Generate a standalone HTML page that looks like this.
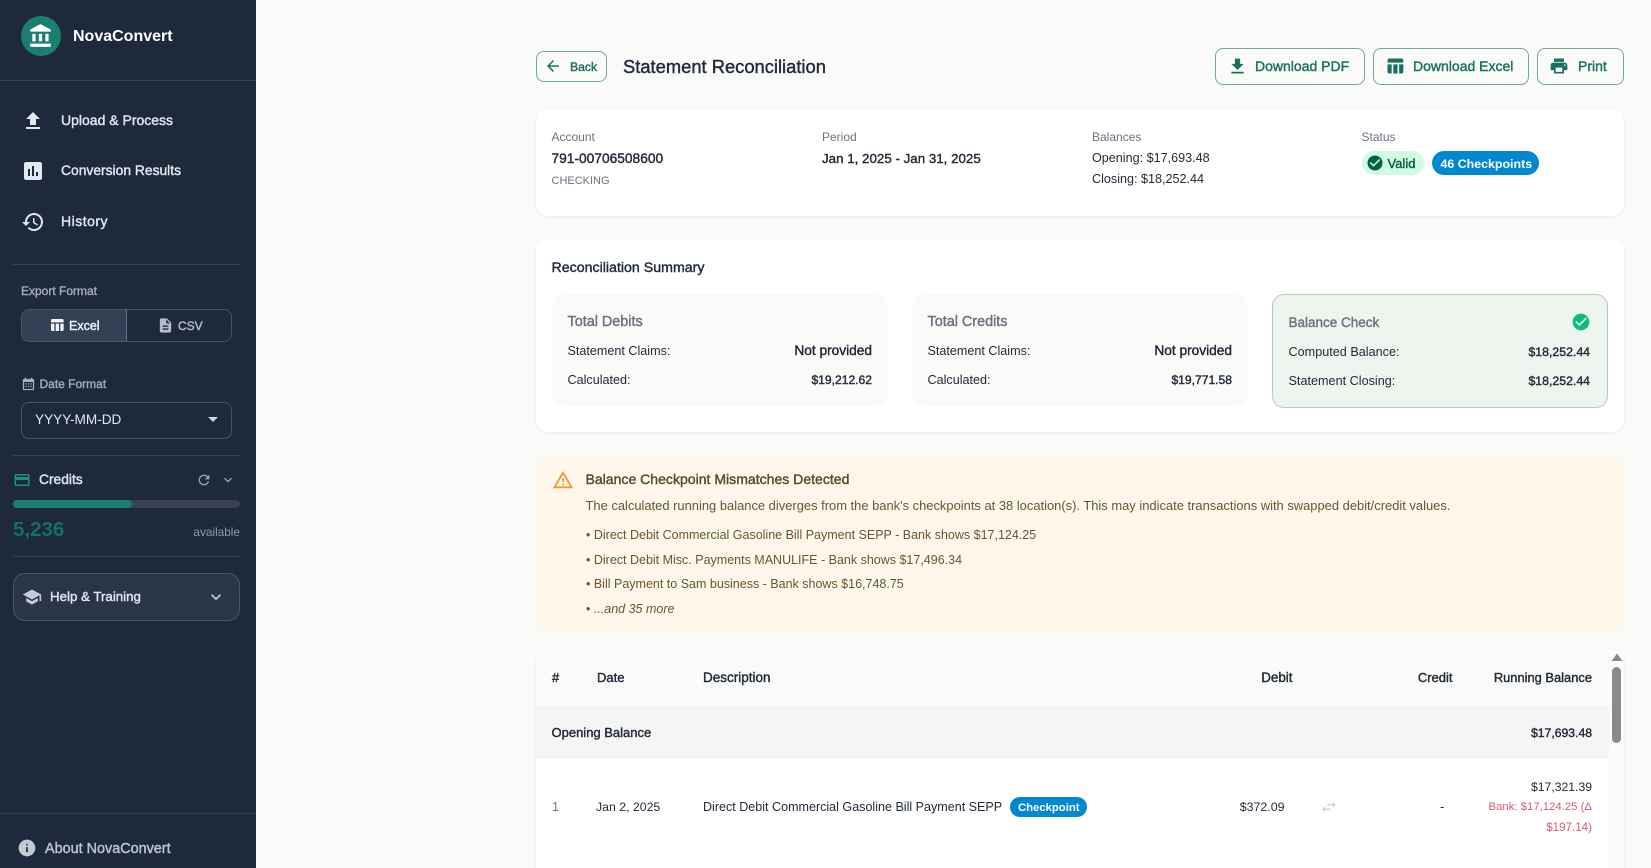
<!DOCTYPE html>
<html lang="en">
<head>
<meta charset="utf-8">
<title>Statement Reconciliation</title>
<style>
*{box-sizing:border-box;margin:0;padding:0}
html,body{width:1651px;height:868px;overflow:hidden;background:#fafaf9;font-family:"Liberation Sans",Arial,sans-serif}
#p{position:relative;width:1651px;height:868px;overflow:hidden}
.b{position:absolute}
.t{position:absolute;white-space:nowrap;line-height:20px;height:20px}
.s{-webkit-text-stroke:.4px currentColor}
.r{text-align:right}
svg{position:absolute;fill:currentColor}
.card{position:absolute;background:#fff;border-radius:12px;box-shadow:0 1px 3px rgba(0,0,0,.07)}
.btn{position:absolute;border:1px solid #6fa79e;border-radius:8px}
.teal{color:#1a6f62}
.side{color:#e2e8f0}
.dv{position:absolute;height:1px;background:#334155}
.lbl{color:#6b7280;font-size:12px}
.d{color:#1f2937}
.box{position:absolute;background:#fafaf8;border-radius:12px}
</style>
</head>
<body>
<div id="p">
<!-- sidebar -->
<div class="b" style="left:0;top:0;width:256px;height:868px;background:#1e293b"></div>
<div class="b" style="left:21px;top:16px;width:40px;height:40px;border-radius:50%;background:#1a7f6e"></div>
<svg style="left:28px;top:23px;color:#fff" width="26" height="26" viewBox="0 0 24 24"><path d="M4 10v7h3v-7H4zm6 0v7h3v-7h-3zM2 22h19v-3H2v3zm14-12v7h3v-7h-3zm-4.5-9L2 6v2h19V6l-9.5-5z"/></svg>
<div class="t" style="left:73px;top:26.5px;font-size:16px;font-weight:700;color:#fff">NovaConvert</div>
<div class="dv" style="left:0;top:80px;width:256px"></div>

<svg class="side" style="left:21px;top:108.5px" width="24" height="24" viewBox="0 0 24 24"><path d="M9 16h6v-6h4l-7-7-7 7h4v6zm-4 2h14v2H5v-2z"/></svg>
<div class="t s side" style="left:61px;top:109.5px;font-size:14px">Upload &amp; Process</div>
<svg class="side" style="left:21px;top:159px" width="24" height="24" viewBox="0 0 24 24"><path d="M19 3H5c-1.1 0-2 .9-2 2v14c0 1.1.9 2 2 2h14c1.1 0 2-.9 2-2V5c0-1.1-.9-2-2-2zM9 17H7v-7h2v7zm4 0h-2V7h2v10zm4 0h-2v-4h2v4z"/></svg>
<div class="t s side" style="left:61px;top:159.5px;font-size:13.85px">Conversion Results</div>
<svg class="side" style="left:21px;top:209.5px" width="24" height="24" viewBox="0 0 24 24"><path d="M13 3c-4.97 0-9 4.03-9 9H1l3.89 3.89.07.14L9 12H6c0-3.87 3.13-7 7-7s7 3.13 7 7-3.13 7-7 7c-1.93 0-3.68-.79-4.94-2.06l-1.42 1.42C8.27 19.99 10.51 21 13 21c4.97 0 9-4.03 9-9s-4.03-9-9-9zm-1 5v5l4.28 2.54.72-1.21-3.5-2.08V8H12z"/></svg>
<div class="t s side" style="left:61px;top:210.5px;font-size:14px;letter-spacing:.5px">History</div>
<div class="dv" style="left:13px;top:264px;width:227px"></div>

<div class="t s" style="left:21px;top:280.5px;font-size:12px;color:#a3abb8">Export Format</div>
<div class="b" style="left:21px;top:309px;width:211px;height:33px;border:1px solid #475569;border-radius:8px;overflow:hidden">
  <div class="b" style="left:0;top:0;width:105px;height:31px;background:#334155;border-right:1px solid #64748b"></div>
</div>
<svg style="left:49px;top:317px;color:#f1f5f9" width="16" height="16" viewBox="0 0 24 24"><path d="M10 10.02h5V21h-5zM17 21h3c1.1 0 2-.9 2-2v-9h-5v11zm3-18H5c-1.1 0-2 .9-2 2v3h19V5c0-1.1-.9-2-2-2zM3 19c0 1.1.9 2 2 2h3V10H3v9z"/></svg>
<div class="t s" style="left:69px;top:315.5px;font-size:12.5px;color:#f1f5f9">Excel</div>
<svg style="left:157px;top:317px;color:#b6bdc8" width="17" height="17" viewBox="0 0 24 24"><path d="M14 2H6c-1.1 0-1.99.9-1.99 2L4 20c0 1.1.89 2 1.99 2H18c1.1 0 2-.9 2-2V8l-6-6zm2 16H8v-2h8v2zm0-4H8v-2h8v2zm-3-5V3.5L18.5 9H13z"/></svg>
<div class="t s" style="left:178px;top:315.5px;font-size:12px;color:#b6bdc8">CSV</div>

<svg style="left:20.5px;top:376.5px;color:#a9b1bd" width="15" height="15" viewBox="0 0 24 24"><path d="M19 3h-1V1h-2v2H8V1H6v2H5c-1.11 0-1.99.9-1.99 2L3 19c0 1.1.89 2 2 2h14c1.1 0 2-.9 2-2V5c0-1.1-.9-2-2-2zm0 16H5V8h14v11zM9 10H7v2h2v-2zm4 0h-2v2h2v-2zm4 0h-2v2h2v-2zm-8 4H7v2h2v-2zm4 0h-2v2h2v-2zm4 0h-2v2h2v-2z"/></svg>
<div class="t s" style="left:39.5px;top:373.5px;font-size:12px;color:#a3abb8">Date Format</div>
<div class="b" style="left:21px;top:402px;width:211px;height:37px;border:1px solid #475569;border-radius:8px"></div>
<div class="t" style="left:35px;top:410px;font-size:13.6px;color:#e2e8f0">YYYY-MM-DD</div>
<svg style="left:200.7px;top:407px;color:#cbd5e1" width="24" height="24" viewBox="0 0 24 24"><path d="M7 10l5 5 5-5z"/></svg>
<div class="dv" style="left:13px;top:455px;width:227px"></div>

<svg style="left:12.5px;top:471px;color:#1a8f7c" width="18" height="18" viewBox="0 0 24 24"><path d="M20 4H4c-1.11 0-1.99.89-1.99 2L2 18c0 1.11.89 2 2 2h16c1.11 0 2-.89 2-2V6c0-1.11-.89-2-2-2zm0 14H4v-6h16v6zm0-10H4V6h16v2z"/></svg>
<div class="t s side" style="left:39px;top:470px;font-size:13.8px">Credits</div>
<svg style="left:196px;top:472px;color:#9aa3af" width="16" height="16" viewBox="0 0 24 24"><path d="M17.65 6.35C16.2 4.9 14.21 4 12 4c-4.42 0-7.99 3.58-7.99 8s3.57 8 7.99 8c3.73 0 6.84-2.55 7.73-6h-2.08c-.82 2.33-3.04 4-5.65 4-3.31 0-6-2.69-6-6s2.69-6 6-6c1.66 0 3.14.69 4.22 1.78L13 11h7V4l-2.35 2.35z"/></svg>
<svg style="left:219.7px;top:472px;color:#9aa3af" width="16" height="16" viewBox="0 0 24 24"><path d="M16.59 8.59L12 13.17 7.41 8.59 6 10l6 6 6-6z"/></svg>
<div class="b" style="left:13px;top:500px;width:227px;height:8px;border-radius:4px;background:#374151"></div>
<div class="b" style="left:13px;top:500px;width:119px;height:8px;border-radius:4px;background:#1a7f6e"></div>
<div class="t" style="left:13px;top:519.5px;font-size:20.5px;font-weight:700;color:#14705f">5,236</div>
<div class="t r" style="right:1411px;top:522px;font-size:11.8px;color:#8f98a6">available</div>
<div class="dv" style="left:13px;top:556px;width:227px"></div>

<div class="b" style="left:13px;top:573px;width:227px;height:48px;border-radius:12px;background:#2a3647;border:1px solid #4b5563"></div>
<svg style="left:22px;top:586.5px;color:#c5ccd6" width="20" height="20" viewBox="0 0 24 24"><path d="M5 13.18v4L12 21l7-3.82v-4L12 17l-7-3.82zM12 3L1 9l11 6 9-4.91V17h2V9L12 3z"/></svg>
<div class="t s side" style="left:50px;top:586.5px;font-size:13.3px">Help &amp; Training</div>
<svg style="left:206px;top:587px;color:#c5ccd6" width="20" height="20" viewBox="0 0 24 24"><path d="M16.59 8.59L12 13.17 7.41 8.59 6 10l6 6 6-6z"/></svg>
<div class="dv" style="left:0;top:813px;width:256px"></div>
<svg style="left:17px;top:838px;color:#c4cad3" width="20" height="20" viewBox="0 0 24 24"><path d="M12 2C6.48 2 2 6.48 2 12s4.48 10 10 10 10-4.48 10-10S17.52 2 12 2zm1 15h-2v-6h2v6zm0-8h-2V7h2v2z"/></svg>
<div class="t s" style="left:45px;top:838.5px;font-size:14.4px;color:#c0c6d0">About NovaConvert</div>

<!-- header -->
<div class="btn" style="left:536px;top:51px;width:71px;height:31px"></div>
<svg class="teal" style="left:544px;top:57px" width="18" height="18" viewBox="0 0 24 24"><path d="M20 11H7.83l5.59-5.59L12 4l-8 8 8 8 1.41-1.41L7.83 13H20v-2z"/></svg>
<div class="t s teal" style="left:570px;top:56.5px;font-size:12.2px">Back</div>
<div class="t s" style="left:623px;top:57px;font-size:18.35px;color:#1f2937">Statement Reconciliation</div>

<div class="btn" style="left:1215px;top:48px;width:150px;height:37px"></div>
<svg class="teal" style="left:1227px;top:55.5px" width="21" height="21" viewBox="0 0 24 24"><path d="M19 9h-4V3H9v6H5l7 7 7-7zM5 18v2h14v-2H5z"/></svg>
<div class="t s teal" style="left:1255px;top:55.5px;font-size:14px">Download PDF</div>
<div class="btn" style="left:1373px;top:48px;width:156px;height:37px"></div>
<svg class="teal" style="left:1384.5px;top:55.5px" width="20" height="20" viewBox="0 0 24 24"><path d="M10 10.02h5V21h-5zM17 21h3c1.1 0 2-.9 2-2v-9h-5v11zm3-18H5c-1.1 0-2 .9-2 2v3h19V5c0-1.1-.9-2-2-2zM3 19c0 1.1.9 2 2 2h3V10H3v9z"/></svg>
<div class="t s teal" style="left:1413px;top:55.5px;font-size:14px">Download Excel</div>
<div class="btn" style="left:1537px;top:48px;width:87px;height:37px"></div>
<svg class="teal" style="left:1549px;top:56px" width="20" height="20" viewBox="0 0 24 24"><path d="M19 8H5c-1.66 0-3 1.34-3 3v6h4v4h12v-4h4v-6c0-1.66-1.34-3-3-3zm-3 11H8v-5h8v5zm3-7c-.55 0-1-.45-1-1s.45-1 1-1 1 .45 1 1-.45 1-1 1zm-1-9H6v4h12V3z"/></svg>
<div class="t s teal" style="left:1578px;top:55.5px;font-size:14px">Print</div>

<!-- account card -->
<div class="card" style="left:536px;top:109px;width:1088px;height:107px"></div>
<div class="t lbl" style="left:551.5px;top:127px">Account</div>
<div class="t s d" style="left:551.5px;top:148.5px;font-size:13.75px">791-00706508600</div>
<div class="t lbl" style="left:551.5px;top:171px;font-size:11px">CHECKING</div>
<div class="t lbl" style="left:822px;top:127px">Period</div>
<div class="t s d" style="left:822px;top:148.5px;font-size:13.35px">Jan 1, 2025 - Jan 31, 2025</div>
<div class="t lbl" style="left:1092px;top:127px">Balances</div>
<div class="t d" style="left:1092px;top:147.5px;font-size:12.6px">Opening: $17,693.48</div>
<div class="t d" style="left:1092px;top:168.5px;font-size:12.6px">Closing: $18,252.44</div>
<div class="t lbl" style="left:1361.5px;top:127px">Status</div>
<div class="b" style="left:1362px;top:151px;width:62px;height:24px;border-radius:12px;background:#d1fae5"></div>
<svg style="left:1366px;top:154px;color:#065f46" width="18" height="18" viewBox="0 0 24 24"><path d="M12 2C6.48 2 2 6.48 2 12s4.48 10 10 10 10-4.48 10-10S17.52 2 12 2zm-2 15l-5-5 1.41-1.41L10 14.17l7.59-7.59L19 8l-9 9z"/></svg>
<div class="t s" style="left:1387.5px;top:153.5px;font-size:13px;color:#065f46">Valid</div>
<div class="b" style="left:1432px;top:151px;width:107px;height:24px;border-radius:12px;background:#0288d1"></div>
<div class="t" style="left:1440.5px;top:153.5px;font-size:12.4px;font-weight:700;color:#fff">46 Checkpoints</div>

<!-- summary -->
<div class="card" style="left:536px;top:240px;width:1088px;height:192px"></div>
<div class="t s d" style="left:551.5px;top:257.5px;font-size:14.2px">Reconciliation Summary</div>
<div class="box" style="left:552px;top:294px;width:336px;height:112px"></div>
<div class="t s" style="left:567.5px;top:311.5px;font-size:14.4px;color:#6b7280">Total Debits</div>
<div class="t d" style="left:567.5px;top:340.5px;font-size:12.6px">Statement Claims:</div>
<div class="t s d r" style="right:779px;top:340.5px;font-size:13.7px">Not provided</div>
<div class="t d" style="left:567.5px;top:369.5px;font-size:12.6px">Calculated:</div>
<div class="t s d r" style="right:779px;top:369.5px;font-size:12.1px">$19,212.62</div>

<div class="box" style="left:912px;top:294px;width:336px;height:112px"></div>
<div class="t s" style="left:927.5px;top:311.5px;font-size:14.4px;color:#6b7280">Total Credits</div>
<div class="t d" style="left:927.5px;top:340.5px;font-size:12.6px">Statement Claims:</div>
<div class="t s d r" style="right:419px;top:340.5px;font-size:13.7px">Not provided</div>
<div class="t d" style="left:927.5px;top:369.5px;font-size:12.6px">Calculated:</div>
<div class="t s d r" style="right:419px;top:369.5px;font-size:12.1px">$19,771.58</div>

<div class="box" style="left:1272px;top:294px;width:336px;height:114px;background:#edf5ee;border:1px solid #b5ccb8"></div>
<div class="t s" style="left:1288.5px;top:313px;font-size:13.5px;color:#6b7280">Balance Check</div>
<svg style="left:1571px;top:312px;color:#10b981" width="20" height="20" viewBox="0 0 24 24"><path d="M12 2C6.48 2 2 6.48 2 12s4.48 10 10 10 10-4.48 10-10S17.52 2 12 2zm-2 15l-5-5 1.41-1.41L10 14.17l7.59-7.59L19 8l-9 9z"/></svg>
<div class="t d" style="left:1288.5px;top:341.5px;font-size:12.65px">Computed Balance:</div>
<div class="t s d r" style="right:61px;top:341.5px;font-size:12.3px">$18,252.44</div>
<div class="t d" style="left:1288.5px;top:370.5px;font-size:12.65px">Statement Closing:</div>
<div class="t s d r" style="right:61px;top:370.5px;font-size:12.3px">$18,252.44</div>

<!-- warning -->
<div class="b" style="left:536px;top:456px;width:1088px;height:177px;border-radius:12px;background:#fff6ec"></div>
<svg style="left:552px;top:469px;color:#ed9c2c" width="22" height="22" viewBox="0 0 24 24"><path d="M12 5.99L19.53 19H4.47L12 5.99M12 2L1 21h22L12 2zm1 14h-2v2h2v-2zm0-6h-2v4h2v-4z"/></svg>
<div class="t s" style="left:585.5px;top:468.5px;font-size:14.05px;color:#5d4a2a">Balance Checkpoint Mismatches Detected</div>
<div class="t" style="left:585.5px;top:495.5px;font-size:12.93px;color:#6b5530">The calculated running balance diverges from the bank's checkpoints at 38 location(s). This may indicate transactions with swapped debit/credit values.</div>
<div class="t" style="left:586px;top:524.5px;font-size:12.5px;color:#6b5530">• Direct Debit Commercial Gasoline Bill Payment SEPP - Bank shows $17,124.25</div>
<div class="t" style="left:586px;top:549.5px;font-size:12.5px;color:#6b5530">• Direct Debit Misc. Payments MANULIFE - Bank shows $17,496.34</div>
<div class="t" style="left:586px;top:573.5px;font-size:12.5px;color:#6b5530">• Bill Payment to Sam business - Bank shows $16,748.75</div>
<div class="t" style="left:586px;top:598.5px;font-size:12.5px;color:#6b5530">• <i>...and 35 more</i></div>

<!-- table -->
<div class="card" style="left:536px;top:649px;width:1088px;height:240px;overflow:hidden">
  <div class="b" style="left:0;top:0;width:1073px;height:57px;background:#fafaf9"></div>
  <div class="b" style="left:0;top:57px;width:1073px;height:53px;background:#f5f5f5"></div>
  <div class="b" style="left:0;top:205px;width:1073px;height:1px;background:#fafafa"></div>
  <div class="b" style="left:1073px;top:0;width:15px;height:240px;background:#fbfbfb"></div>
</div>
<svg style="left:1611px;top:652px;color:#8a8a8a" width="12" height="11" viewBox="0 0 12 11"><path d="M6 1.5L11.5 9H.5z"/></svg>
<div class="b" style="left:1612px;top:667px;width:9px;height:76px;border-radius:4.5px;background:#8a8a8a"></div>

<div class="t s d" style="left:552px;top:668px;font-size:13px">#</div>
<div class="t s d" style="left:597px;top:668px;font-size:13px">Date</div>
<div class="t s d" style="left:703px;top:668px;font-size:13.5px">Description</div>
<div class="t s d r" style="right:358.5px;top:668px;font-size:13.4px">Debit</div>
<div class="t s d r" style="right:198.5px;top:668px;font-size:13px">Credit</div>
<div class="t s d r" style="right:59px;top:668px;font-size:12.9px">Running Balance</div>
<div class="t s d" style="left:551.5px;top:722.5px;font-size:13px">Opening Balance</div>
<div class="t s d r" style="right:59px;top:722.5px;font-size:12.2px">$17,693.48</div>

<div class="t" style="left:552px;top:796.5px;font-size:12.5px;color:#6b7280">1</div>
<div class="t d" style="left:596px;top:797px;font-size:12.3px">Jan 2, 2025</div>
<div class="t d" style="left:703px;top:797px;font-size:12.55px">Direct Debit Commercial Gasoline Bill Payment SEPP</div>
<div class="b" style="left:1010px;top:797px;width:77px;height:20px;border-radius:10px;background:#0288d1"></div>
<div class="t" style="left:1018px;top:797.5px;font-size:11.3px;font-weight:700;color:#fff">Checkpoint</div>
<div class="t d r" style="right:366.5px;top:797px;font-size:12.4px">$372.09</div>
<svg style="left:1320px;top:798px;color:#cfd4d8" width="18" height="18" viewBox="0 0 24 24"><path d="M6.99 11L3 15l3.99 4v-3H14v-2H6.99v-3zM21 9l-3.99-4v3H10v2h7.01v3L21 9z"/></svg>
<div class="t d" style="left:1440px;top:797px;font-size:13px">-</div>
<div class="t d r" style="right:59px;top:776.5px;font-size:12.2px">$17,321.39</div>
<div class="t r" style="right:59px;top:797px;font-size:11.35px;color:#e0566f">Bank: $17,124.25 (Δ</div>
<div class="t r" style="right:59px;top:817.5px;font-size:11.6px;color:#e0566f">$197.14)</div>
</div>
</body>
</html>
